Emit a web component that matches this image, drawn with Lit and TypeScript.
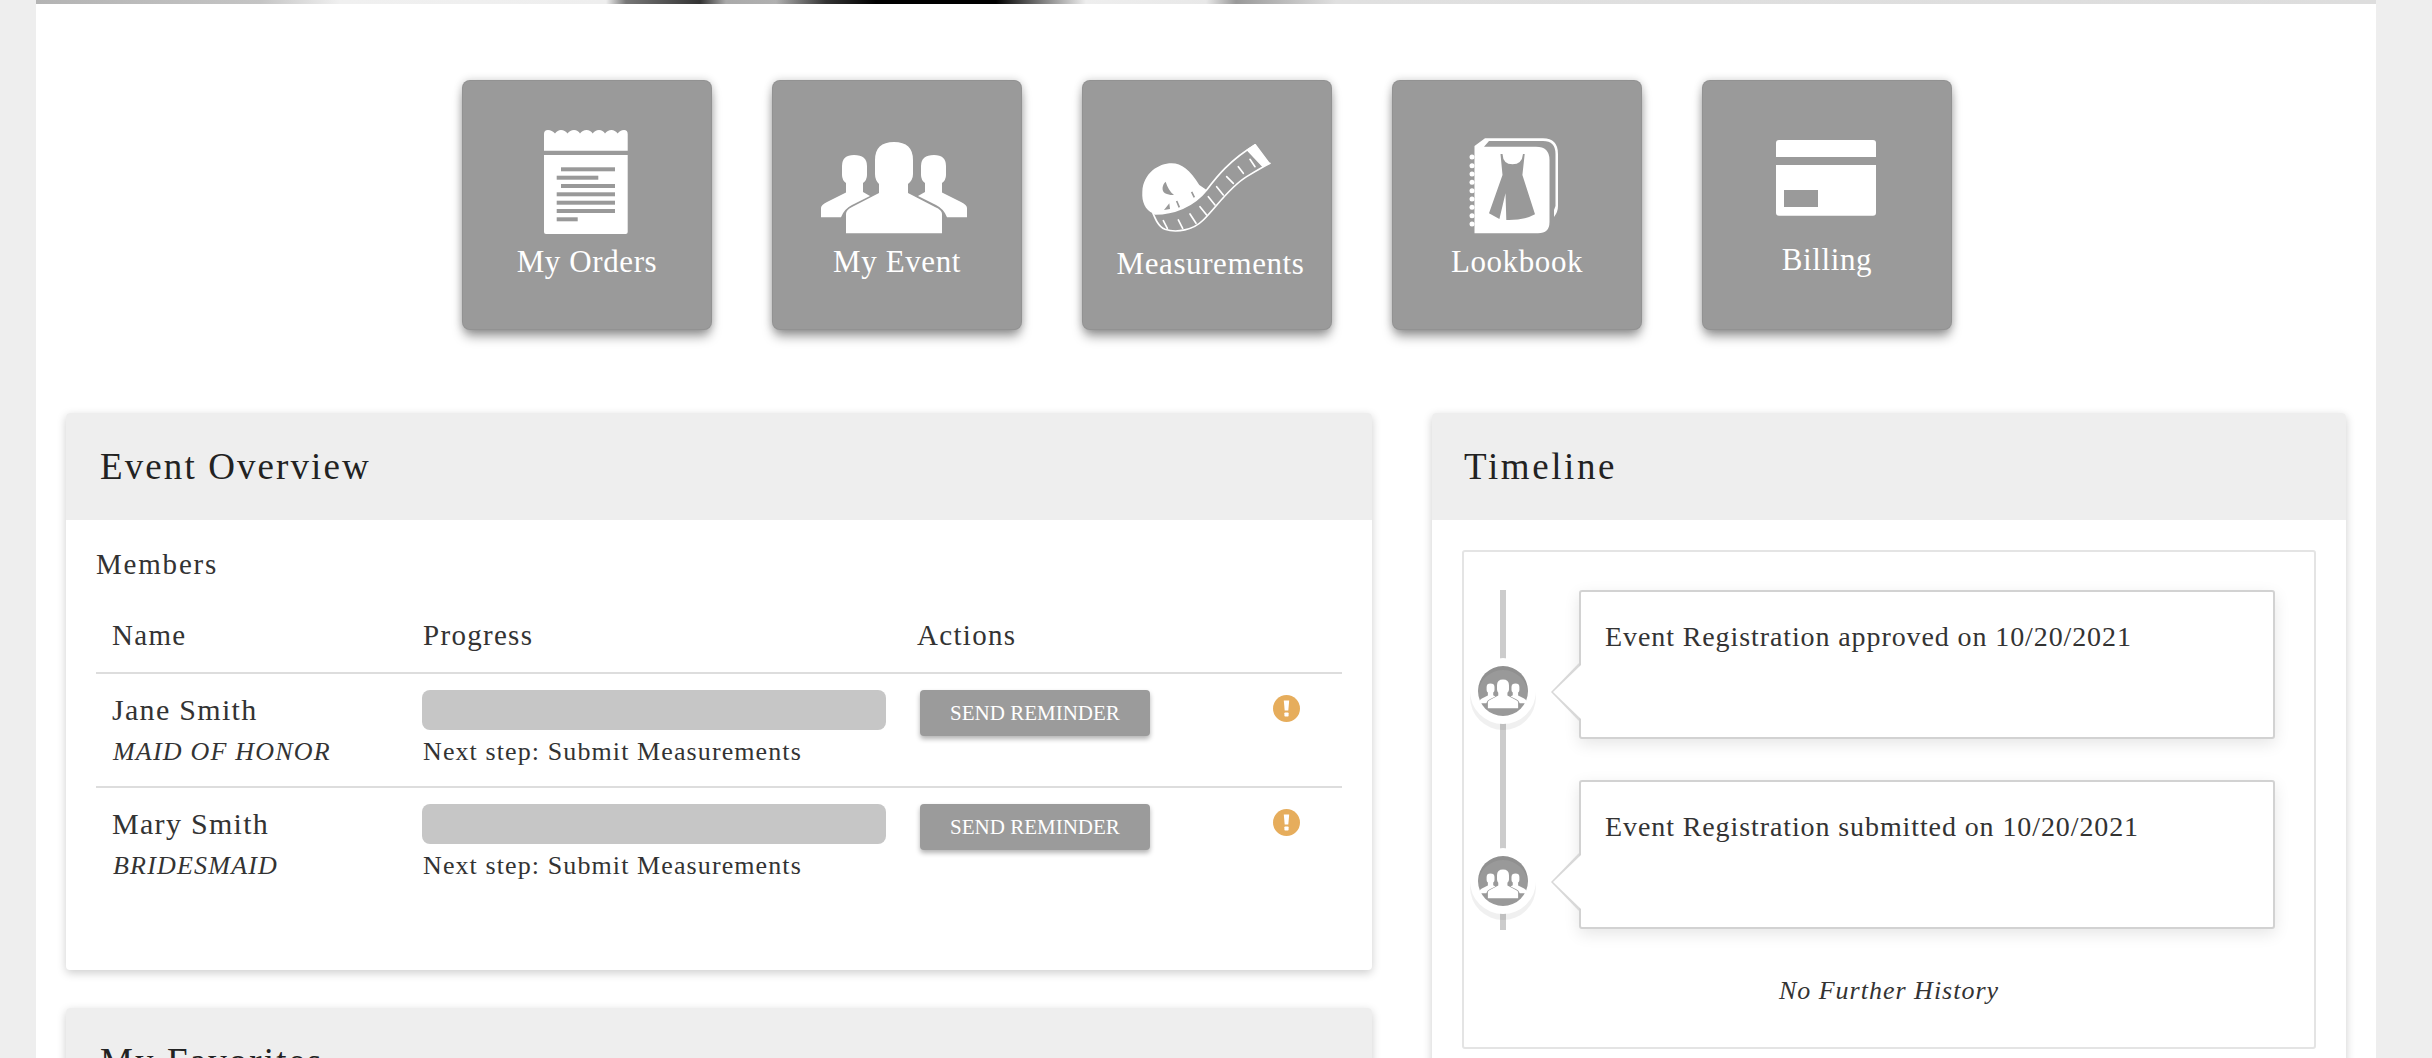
import { LitElement, html, css, svg } from "lit";
import { customElement } from "lit/decorators.js";

const person = svg`<path d="M74 153.3V134Q74 130 80 127L107 113V104Q103 100 103 94V80Q103 62 122 62Q141 62 141 80V94Q141 100 136 104V113L163 127Q170 130 170 134V153.3Z"/>
<path d="M49 137.3V128Q49 125 55 122L74 112.5V103Q70 100 70 95V86Q70 75 82 75Q95 75 95 86V95Q95 100 91 103V112L98 116L80 125Q72 129 69 137.3Z"/>
<path d="M195 137.3V128Q195 125 189 122L170 112.5V103Q174 100 174 95V86Q174 75 162 75Q149 75 149 86V95Q149 100 153 103V112L146 116L164 125Q172 129 175 137.3Z"/>`;

const icons: Record<string, unknown> = {
  orders: svg`<path fill="#fff" d="M82 70.7V54Q82 50 86 50Q90 50 93 53.5Q95.5 50 99 50Q103 50 105.5 53.5Q108 50 112 50Q116 50 118 53.5Q120.5 50 124.5 50Q128.5 50 130.7 53.5Q133 50 137 50Q141 50 143 53.5Q145.5 50 149.5 50Q153 50 155.7 53.5Q158 50 162 50Q165.7 50 165.7 54V70.7Z"/>
    <path fill="#fff" d="M82 75H165.7V152Q165.7 154 163.7 154H84Q82 154 82 152Z"/>
    <g fill="#999"><rect x="99" y="87.3" width="54" height="4"/><rect x="94.7" y="95.7" width="41.6" height="4"/><rect x="99" y="104" width="54" height="4"/><rect x="94.7" y="112.3" width="58.3" height="4"/><rect x="94.7" y="120.7" width="58.3" height="4"/><rect x="94.7" y="129" width="58.3" height="4"/><rect x="94.7" y="137.3" width="21" height="4"/></g>`,
  event: svg`<g fill="#fff">${person}</g>`,
  tape: svg`<g transform="translate(-12 -10) scale(.3333)">
    <path fill="#fff" d="M250 430C225 420 215 395 217 365C220 310 265 280 305 280C335 280 360 300 388 345L410 360C370 410 310 432 250 432Z"/>
    <path fill="#999" d="M287 335C276 345 274 362 285 370C295 375 305 376 312 375C300 365 292 352 287 335Z"/>
    <path fill="#999" d="M298 400L282 420L300 417Z"/>
    <path fill="none" stroke="#999" stroke-width="5" d="M320 393L328 412M365 366L373 382"/>
    <g fill="none" stroke="#fff" stroke-width="5" stroke-linecap="round">
      <path d="M247 425C255 445 265 470 285 478C320 490 370 480 400 450C440 410 480 350 530 320C555 305 580 290 600 280"/>
      <path d="M255 432C310 432 370 410 410 360C440 320 480 270 555 225"/>
      <path d="M540 268L555 290M505 290L520 310M470 320L490 340M440 350L460 375M415 380L435 405M390 410L410 435M360 432L378 460M325 450L338 475M280 452L292 475"/>
    </g>
    <path fill="#fff" stroke="#fff" stroke-width="4" stroke-linejoin="round" d="M556 224L598 280L578 289L532 240Z"/>
  </g>`,
  book: svg`<g fill="#fff">
    <path fill-rule="evenodd" d="M82.5 66V153.3H146Q157.5 153.3 157.5 142V80Q157.5 66.7 144 66.7H92L97 61H151Q163.5 61 163.5 74V126L162 130V137Q166 132 166 126V74Q166 58.3 151 58.3H93Z"/>
    <g><circle cx="80" cy="77" r="2.5"/><circle cx="80" cy="85.7" r="2.5"/><circle cx="80" cy="94" r="2.5"/><circle cx="80" cy="102.3" r="2.5"/><circle cx="80" cy="110.7" r="2.5"/><circle cx="80" cy="119" r="2.5"/><circle cx="80" cy="127.3" r="2.5"/><circle cx="80" cy="135.7" r="2.5"/><circle cx="80" cy="144" r="2.5"/></g>
    </g>
    <path fill="#999" d="M108.5 74H110.5Q111 84.3 120.5 84.3Q130 84.3 131 74H132.7L130.4 95L143 134.3Q132 140.5 114.3 140L113.5 113.3L107.4 139L97 133.3L110.5 95Z"/>`,
  card: svg`<g fill="#fff"><path d="M74 77V63Q74 60 77 60H171Q174 60 174 63V77Z"/><path fill-rule="evenodd" d="M74 85H174V132.7Q174 135.7 171 135.7H77Q74 135.7 74 132.7ZM82 110V127H116V110Z"/></g>`,
};

const miniPeople = html`<svg class="mini" viewBox="49 62 146 92" aria-hidden="true"><g fill="#fff">${person}</g></svg>`;

@customElement("app-root")
export class AppRoot extends LitElement {
  static styles = css`
    :host { display: block; height: 100vh; overflow: hidden; background: #eee; font-family: "Liberation Serif", serif; color: #333; }
    .page { margin-left: 36px; width: 2340px; background: #fff; min-height: 100%; }
    .strip { height: 4px; background: linear-gradient(90deg, #b4b4b4 0, #c4c4c4 224px, #f0f0f0 304px, #eee 570px, #777 590px, #333 664px, #aaa 690px, #b0b0b0 740px, #333 790px, #000 840px, #000 960px, #888 1010px, #eee 1050px, #e8e8e8 1170px, #999 1200px, #e0e0e0 1300px, #ddd 2340px); }
    .tiles { display: flex; gap: 60px; padding: 76px 0 0 426px; }
    .tile { width: 250px; height: 250px; box-sizing: border-box; border-radius: 8px; background: #9a9a9a; color: #fff; box-shadow: inset 0 0 0 1px rgba(0,0,0,.05), 0 8px 12px -2px rgba(0,0,0,.4), 0 0 9px rgba(0,0,0,.18); text-align: center; font-size: 31px; letter-spacing: .6px; line-height: 40px; }
    .tile svg { display: block; width: 250px; height: 160px; }
    .tile span { display: block; margin-top: 2px; }
    .tile.tape span { margin: 4px 0 0 7px; }
    .tile.card span { margin-top: 0; }
    .columns { display: flex; gap: 60px; padding: 83px 30px 0; align-items: flex-start; }
    .left { width: 1306px; display: flex; flex-direction: column; gap: 38px; }
    .right { width: 914px; }
    .panel { background: #fff; border-radius: 4px; box-shadow: 0 3px 10px rgba(0,0,0,.2); }
    .panel-head { height: 107px; box-sizing: border-box; padding: 30px 34px 0; background: #eee; border-radius: 4px 4px 0 0; font-size: 37px; line-height: 48px; letter-spacing: 2.1px; color: #222; }
    .panel-head.tl { padding-left: 32px; letter-spacing: 2.6px; }
    .overview { height: 557px; box-sizing: border-box; }
    .members-body { padding: 24px 30px 0; }
    .members-title { font-size: 29px; line-height: 40px; letter-spacing: 1.8px; }
    .row { display: grid; grid-template-columns: 311px 497px 340px 98px; }
    .row.head { height: 90px; box-sizing: border-box; padding-top: 31px; border-bottom: 2px solid #ddd; font-size: 29px; line-height: 40px; letter-spacing: 1.3px; }
    .row.head div { padding-left: 16px; }
    .row.head .act { padding-left: 13px; }
    .row.member { height: 114px; box-sizing: border-box; border-bottom: 2px solid #ddd; padding-top: 16px; }
    .row.member:last-child { border-bottom: 0; }
    .who { padding-left: 16px; }
    .name { font-size: 30px; line-height: 40px; letter-spacing: 1.3px; }
    .role { margin: 2px 0 0 1px; font-size: 26px; line-height: 40px; letter-spacing: 1.2px; font-style: italic; }
    .prog { padding-left: 15px; }
    .bar { width: 464px; height: 40px; border-radius: 8px; background: #c6c6c6; }
    .step { margin: 5px 0 0 1px; font-size: 26px; line-height: 34px; letter-spacing: 1.1px; white-space: nowrap; }
    .send { margin-left: 16px; width: 230px; height: 46px; border: 0; padding: 0; border-radius: 4px; background: #9b9b9b; color: #fff; font: 21px "Liberation Serif", serif; box-shadow: 0 3px 5px rgba(0,0,0,.3); }
    .warn { display: block; width: 27px; height: 27px; margin: 5px 0 0 29px; }
    .tl-body { padding: 30px 30px 0; height: 640px; box-sizing: border-box; }
    .tl-box { position: relative; height: 499px; box-sizing: border-box; border: 2px solid #e4e4e4; border-radius: 3px; padding: 38px 39px 0 115px; }
    .tl-line { position: absolute; left: 36px; top: 38px; width: 6px; height: 340px; background: #ccc; }
    .tl-items { display: flex; flex-direction: column; gap: 41px; }
    .tl-item { position: relative; height: 149px; box-sizing: border-box; border: 2px solid #d2d2d2; border-radius: 3px; background: #fff; padding: 25px 24px 0; font-size: 28px; line-height: 40px; letter-spacing: .9px; box-shadow: 0 5px 16px rgba(0,0,0,.1); }
    .tl-item::before, .tl-item::after { content: ""; position: absolute; width: 0; height: 0; border-style: solid; border-color: transparent; }
    .tl-item::before { left: -30px; top: 71px; border-width: 29px 28px 29px 0; border-right-color: #d8d8d8; }
    .tl-item::after { left: -28px; top: 73px; border-width: 27px 28px 27px 0; border-right-color: #fff; }
    .badge { position: absolute; left: -103px; top: 74px; width: 50px; height: 50px; border-radius: 50%; background: #999; display: flex; align-items: center; justify-content: center; box-shadow: 0 0 0 8px #fff, 0 6px 0 8px rgba(0,0,0,.06), inset 0 4px 0 rgba(0,0,0,.06); }
    .mini { flex: none; width: 46px; height: 30px; margin-top: 5px; }
    .nofurther { margin: 42px -39px 0 -115px; text-align: center; font-size: 26px; line-height: 40px; letter-spacing: 1px; font-style: italic; }
  `;

  tile(key: string, cls: string, label: string) {
    return html`<div class="tile ${cls}"><svg viewBox="0 0 250 160" aria-hidden="true">${icons[key]}</svg><span>${label}</span></div>`;
  }

  member(name: string, role: string) {
    return html`<div class="row member">
      <div class="who"><div class="name">${name}</div><div class="role">${role}</div></div>
      <div class="prog"><div class="bar"></div><div class="step">Next step: Submit Measurements</div></div>
      <div><button class="send">SEND REMINDER</button></div>
      <div><svg class="warn" viewBox="0 0 27 27" aria-hidden="true"><circle cx="13.5" cy="13.5" r="13.5" fill="#e6ad5c"/><path fill="#fff" d="M10.8 5.5h5.4l-.9 10h-3.6z"/><rect x="11.4" y="17.4" width="4.2" height="4.2" rx=".8" fill="#fff"/></svg></div>
    </div>`;
  }

  tlItem(text: string) {
    return html`<div class="tl-item"><div class="badge">${miniPeople}</div>${text}</div>`;
  }

  render() {
    return html`<div class="page">
      <div class="strip"></div>
      <div class="tiles">
        ${this.tile("orders", "orders", "My Orders")}
        ${this.tile("event", "event", "My Event")}
        ${this.tile("tape", "tape", "Measurements")}
        ${this.tile("book", "book", "Lookbook")}
        ${this.tile("card", "card", "Billing")}
      </div>
      <div class="columns">
        <div class="left">
          <section class="panel overview">
            <div class="panel-head">Event Overview</div>
            <div class="members-body">
              <div class="members-title">Members</div>
              <div class="row head"><div>Name</div><div>Progress</div><div class="act">Actions</div><div></div></div>
              ${this.member("Jane Smith", "MAID OF HONOR")}
              ${this.member("Mary Smith", "BRIDESMAID")}
            </div>
          </section>
          <section class="panel"><div class="panel-head">My Favorites</div></section>
        </div>
        <div class="right">
          <section class="panel">
            <div class="panel-head tl">Timeline</div>
            <div class="tl-body">
              <div class="tl-box">
                <div class="tl-line"></div>
                <div class="tl-items">
                  ${this.tlItem("Event Registration approved on 10/20/2021")}
                  ${this.tlItem("Event Registration submitted on 10/20/2021")}
                </div>
                <div class="nofurther">No Further History</div>
              </div>
            </div>
          </section>
        </div>
      </div>
    </div>`;
  }
}
